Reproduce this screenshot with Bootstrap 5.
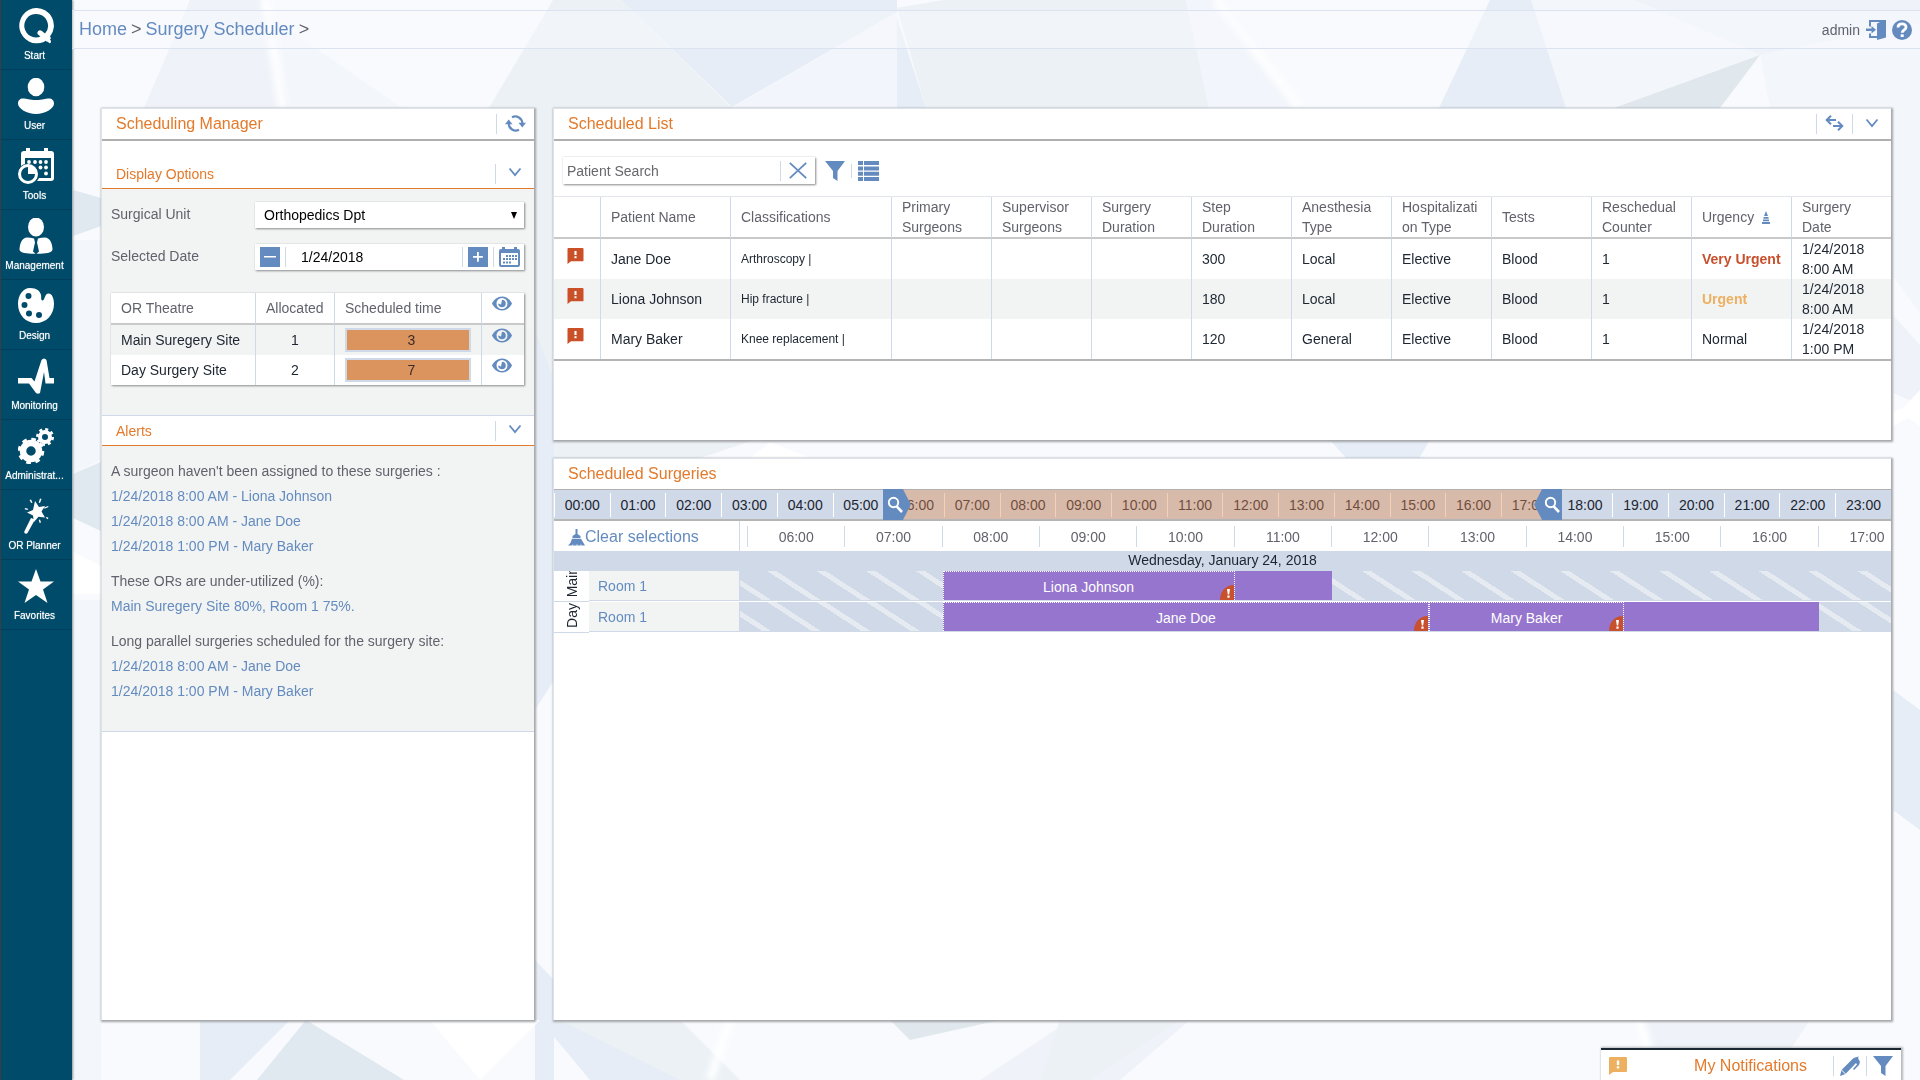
<!DOCTYPE html>
<html lang="en">
<head>
<meta charset="utf-8">
<meta name="viewport" content="width=device-width, initial-scale=1">
<title>Surgery Scheduler</title>
<link href="https://cdn.jsdelivr.net/npm/bootstrap@5.3.0/dist/css/bootstrap.min.css" rel="stylesheet">
<style>
:root{--blue:#648bbf;--pale:#cfd9e8;--orange:#e37a2b;--ink:#1d2530;--grey:#62626c;--soft:#f2f4f4;--navy:#004b69}
body{font-family:"Liberation Sans",Arial,sans-serif;font-size:14px;line-height:20px;color:var(--ink);background:#f6f9fc}
a{color:var(--blue);text-decoration:none}
svg{display:block;fill:currentColor;flex:none}
.q-backdrop{position:fixed;inset:0;width:100%;height:100%;z-index:-1}
.q-iconbtn{border:0;background:none;padding:0;color:var(--blue);flex:none}
.q-rule{width:1px;height:20px;background:var(--pale);flex:none}

.q-side{width:72px;background:var(--navy);border-left:1px solid #3a3d42;box-shadow:1px 0 2px #8a929a;flex:none}
.q-side a{height:70px;padding:8px 4px 0 0;border-bottom:1px solid #003f5b;color:#fff;font-size:10px;line-height:12px;text-shadow:0 0 1px rgba(255,255,255,.7)}
.q-side svg{width:36px;height:36px;margin-left:2px}
.q-side span{margin-top:6px}

.q-main{min-width:0}
.q-top{height:39px;margin-top:10px;padding:0 8px 0 7px;border:solid #dbe3f0;border-width:1px 0;background:rgba(250,251,254,.4)}
.q-user{gap:6px;color:var(--grey)}
.q-crumbs{font-size:18px;color:var(--grey);padding-bottom:2px}
.q-crumbs .breadcrumb-item+.breadcrumb-item::before{content:">";padding:0 4px 0 0;color:var(--grey)}
.q-crumbs .breadcrumb-item+.breadcrumb-item{padding-left:4px}
.q-work{padding:59px 29px 60px 29px;gap:19px}
.q-left{width:433px;flex:none}
.q-right{gap:18px;min-width:0}
.q-panel{background:#fff;border:solid #dde3ea;border-width:1px 0 0 1px;box-shadow:1px 1px 2px 1px #a3a5a8}
.q-bar{height:32px;padding:0 8px 0 14px;border-bottom:2px solid #b0b0b0;color:var(--orange);flex:none}
.q-bar h2,.q-notes h2{font-size:16px;line-height:20px;margin:0;font-weight:400}
.q-bar .q-iconbtn{padding-bottom:2px}
.q-sub{padding:0 12px 0 14px;border-bottom:1px solid var(--orange);color:var(--orange)}
.q-sub h3{font-size:14px;line-height:20px;margin:0;font-weight:400}
.q-display{height:48px;padding-top:19px}
.q-alerthead{height:31px;border-top:1px solid var(--pale)}
.q-options{background:var(--soft);padding:13px 10px 30px 9px;color:var(--grey)}
.q-field{margin-bottom:16px}
.q-field-last{margin-bottom:23px}
.q-field label{width:144px;padding-bottom:2px;flex:none}
.q-box{height:26px;background:#fff;border:0;border-radius:0;box-shadow:1px 1px 2px #8d8d8d,0 0 1px #c4c8cc;color:#000}
select.q-box{appearance:none;padding:0 9px;font-size:14px;background:#fff url("data:image/svg+xml,%3Csvg xmlns='http://www.w3.org/2000/svg' viewBox='0 0 6 7'%3E%3Cpath d='M0 0h6L3 7z'/%3E%3C/svg%3E") no-repeat right 7px center/6px 7px}
.q-date{gap:5px;padding:0 4px 0 5px}
.q-date input{border:0;font-size:14px;padding:0 10px;min-width:0;outline:0}
.q-step{width:20px;height:20px;background:var(--blue);color:#fff;border:0;padding:3px}
.q-gridbox{box-shadow:1px 1px 2px #8d8d8d,0 0 1px #b8bcc2}
.q-grid{width:100%;table-layout:fixed;margin:0;background:#fff;color:var(--ink);border-collapse:separate;border-spacing:0}
.q-grid th{font-weight:400;color:var(--grey);border-bottom:2px solid #c9c9c9}
.q-grid th,.q-grid td{padding:0 0 0 10px;border-left:1px solid var(--pale);overflow-wrap:anywhere}
.q-grid th:first-child,.q-grid td:first-child{border-left:0}
.q-or th{height:32px}.q-or td{height:30px}
.q-or tbody tr:nth-child(odd){background:var(--soft)}
.q-or svg{margin-bottom:5px}
.q-load{width:126px;height:24px;border:2px solid var(--pale);background:#db945d;color:#3a2c2a;padding-left:7px}
.q-alerts{background:var(--soft);border-bottom:1px solid var(--pale);padding:13px 10px 27px 9px;color:var(--grey);line-height:25px}
.q-alerts section{margin-bottom:10px}
.q-alerts p{margin:0}

.q-list{height:332px}
.q-tools{padding:16px 8px 12px 9px}
.q-search{width:252px;height:27px;margin-right:10px}
.q-search input{border:0;outline:0;padding:0 4px;font-size:14px;min-width:0}
.q-search input::placeholder{color:#68686c;opacity:1}
.q-rule-short{height:14px;margin:0 6px}
.q-sched{border-top:1px solid #e3e6ea;border-bottom:2px solid #b4b4b4}
.q-sched th,.q-sched td{height:40px;padding-right:10px}
.q-sched th{height:42px}
.q-sched tbody tr:nth-child(even){background:var(--soft)}
.q-sched .q-flag{padding-left:13px;color:#ca5028}
.q-flag svg{margin-bottom:6px}
.q-class{font-size:12px}
.q-sched .q-very{color:#c8502c;font-weight:700;white-space:nowrap;padding-right:0}
.q-urg{color:#edb060;font-weight:700}
.q-sort{color:var(--blue)}

.q-day{height:31px;background:var(--pale);border-bottom:2px solid #b5b5b5;position:relative;margin-top:-1px}
.q-day>span{border-left:1px solid #fff;height:24px;line-height:24px;flex:1 1 0;min-width:0;text-align:center}
.q-tint{position:absolute;top:0;bottom:0;background:rgba(229,140,80,.4)}
.q-grip{position:absolute;top:-1px;height:31px;width:28px;color:#fff;background:var(--blue);border:0;padding:0}
.q-grip-a{clip-path:polygon(0 0,20px 0,28px 50%,20px 100%,0 100%);padding-left:4px}
.q-grip-b{clip-path:polygon(8px 0,100% 0,100% 100%,8px 100%,0 50%);padding-left:10px}
.q-name{width:186px;flex:none}
.q-hourrow{height:30px}
.q-clear{font-size:16px;padding:2px 0 0 14px;border-right:1px solid var(--pale)}
.q-hours{min-width:0;overflow:hidden;padding:5px 0 0 7px}
.q-hours span{flex:none;border-left:1px solid var(--pale);height:21px;line-height:22px;text-align:center;color:var(--grey)}
.q-date-row{background:var(--pale);height:20px;text-align:center;line-height:19px}
.q-lane{height:31px}
.q-site{width:35px;background:#fff;border-bottom:1px solid var(--pale);overflow:hidden;flex:none}
.q-site span{writing-mode:vertical-rl;transform:rotate(180deg);white-space:nowrap;padding-top:4px;line-height:16px}
.q-room{background:var(--soft);border:solid var(--pale);border-width:0 1px 1px 0;padding-left:9px;line-height:30px;margin-bottom:1px}
.q-track{min-width:0;height:29px;background:repeating-linear-gradient(33deg,var(--pale) 0 12px,#e6ebf2 12px 17px,var(--pale) 17px 27px)}
.q-trackbox{min-width:0;border-bottom:1px solid var(--pale);background:#f6f8fa;margin-bottom:1px}
.q-case{background:#9575cd;color:#fff;height:29px;line-height:31px;text-align:center;position:relative;flex:none}
.q-booked{border:dotted #fff;border-width:1px 1px 0 1px}
.q-case svg{position:absolute;right:0;bottom:0}

.q-notes{position:fixed;right:19px;bottom:0;width:300px;height:32px;gap:6px;background:#fff;border-top:2px solid #1b2733;box-shadow:1px 0 2px 1px #b3b7bb;padding:2px 8px 0}
.q-notes h2{color:var(--orange);text-align:right;padding-right:20px}
.q-amber{color:#edb060}
</style>
<script src="https://cdn.jsdelivr.net/npm/bootstrap@5.3.0/dist/js/bootstrap.bundle.min.js"></script>
</head>
<body>
<svg class="q-backdrop" viewBox="0 0 1920 1080" preserveAspectRatio="none" aria-hidden="true">
<defs><filter id="soft"><feGaussianBlur stdDeviation="3"/></filter></defs>
<rect width="1920" height="1080" fill="#f8fafd"/>
<path fill="#eff3f9" d="M190 0h71l29 108 20 80H110zM1634 0h286v23l-160 32zM1893 315l27 30v60l-27-12zM980 1080l90-60h120l-70 60zM1640 1020h170l-40 60h-110z"/>
<path fill="#f3f7fc" d="M261 10l141 98h-112zM1531 0h103l126 55-146 53h-48zM1760 55l160-32v290l-150-205zM73 240h28v220l-28 14zM73 600h28v480H73z"/>
<path fill="#ecf1f6" d="M553 0h68l111 108H489zM897 8l47-8h242l23 108H926zM535 100h19v350h-19zM554 440h200l-60 20H554zM560 1020h120l60 60H640zM1060 1020h120l-90 60h-50z"/>
<path fill="#e6edf6" d="M621 0h276v12L732 107zM895 12l31 96h-29zM1490 0h41l35 108h-127zM535 330l19 50v300l-19 30zM1330 440h100l-12 20h-70zM200 1020h90l-60 60h-30zM540 1020h20l120 60h-90zM1893 690l27 20v120l-27-20zM535 960l19 20v100h-19z"/>
<path fill="#f2f5fb" d="M897 12v96H732zM1186 0h29l89 108h-95z"/>
<path fill="#e0e8ee" d="M1760 55l-40 53h-106zM890 1020h110l-90 20z"/>
<path fill="#e0e8f0" d="M73 190l28 8v28l-28 10zM73 474l28-12v69l-28-13zM306 1020l98 60H257z"/>
<path fill="#fff" d="M73 552l28 14v28H73zM430 1020h110l-60 60zM770 442l40 16h-60zM1893 412l10-4 17-18v36l-12-8-15 8z"/>
<g fill="none" stroke="#fff" stroke-width="8" filter="url(#soft)"><path d="M265 0l18 108M1215 0l85 108M1640 1020l18 60M730 1020l-20 60"/></g>
</svg>
<svg width="0" height="0" class="position-absolute" aria-hidden="true">
<defs>
<symbol id="i-funnel" viewBox="0 0 20 20"><path d="M0 0h20l-7.500 10v10l-4.500-3v-7z"/></symbol>
<symbol id="i-eye" viewBox="0 0 20 15"><path fill-rule="evenodd" d="M10 .5c4.400 0 8 3 10 7-2 4-5.600 7-10 7s-8-3-10-7c2-4 5.600-7 10-7zm0 1.500a5.500 5.500 0 1 0 0 11 5.500 5.500 0 0 0 0-11z"/><path d="M10 3.700A3.800 3.800 0 1 1 6.200 7.500L9 8.500z"/></symbol>
<symbol id="i-chev" viewBox="0 0 14 10"><path fill="none" stroke="currentColor" stroke-width="1.800" d="M1.500 1.500L7 8l5.500-6.500"/></symbol>
<symbol id="i-flag" viewBox="0 0 18 18"><path fill-rule="evenodd" d="M1 0h16q1 0 1 1v13q0 1-1 1H4l-4 3V1q0-1 1-1zm6.800 3.500v4.500h2.400V3.500zm0 5.800v2.200h2.400V9.300z"/></symbol>
<symbol id="i-mag" viewBox="0 0 16 18"><g fill="none" stroke="currentColor"><circle cx="6.500" cy="6.500" r="4.700" stroke-width="1.900"/><path stroke-width="2.600" d="M9.700 10.300l5.300 5.700"/></g></symbol>
<symbol id="i-warn" viewBox="0 0 14 15"><path fill="#c8502c" d="M14 0v15H0C0 7 5 0 14 0z"/><path fill="#fff" d="M7 4h3l-.8 5.500H7.800zM7.400 10.500h2.200v2.300H7.400z"/></symbol>
</defs>
</svg>

<div class="d-flex min-vh-100">
<nav class="q-side d-flex flex-column" aria-label="Main">
<a href="#" class="d-flex flex-column align-items-center"><svg viewBox="0 0 36 36"><path fill-rule="evenodd" d="M18 0a17.500 17.500 0 0 1 14 28.500l1 1.500 -1.500 2q-2 3-4 .8L25.800 34A17.700 17.700 0 1 1 18 0zm0 6a11.700 11.700 0 1 0 4.500 22.500l-2.800-2.300q-1-1.500.6-3.200 1.500-1.500 3.300-.2l3.400 2.700A11.700 11.700 0 0 0 18 6z"/><path d="M26 29l5 6q2 1 2-2l-3-5z"/></svg><span>Start</span></a>
<a href="#" class="d-flex flex-column align-items-center"><svg viewBox="0 0 36 36"><ellipse cx="18" cy="9" rx="8.300" ry="9.300"/><path d="M5 20.500c4 0 6 1.500 13 1.500s9-1.500 13-1.500c3 0 5 2 5 5 0 5-9 10.500-18 10.500S0 30.500 0 25.500c0-3 2-5 5-5z"/></svg><span>User</span></a>
<a href="#" class="d-flex flex-column align-items-center"><svg viewBox="0 0 36 36"><path fill-rule="evenodd" d="M8 0h4v3h14V0h4v3h3q3 0 3 3v24q0 3-3 3H19a11 11 0 0 0 2-3h12V10H7v6a11 11 0 0 0-4 2V6q0-3 3-3h2z"/><path fill-rule="evenodd" d="M10 16a10 10 0 1 1 0 20 10 10 0 0 1 0-20zm0 3a7 7 0 1 0 7 7h-7z"/><g><circle cx="11" cy="14" r="1.900"/><circle cx="17" cy="14" r="1.900"/><circle cx="22.500" cy="14" r="1.900"/><circle cx="28" cy="14" r="1.900"/><circle cx="22.500" cy="19.500" r="1.900"/><circle cx="28" cy="19.500" r="1.900"/><circle cx="28" cy="25.500" r="1.900"/></g></svg><span>Tools</span></a>
<a href="#" class="d-flex flex-column align-items-center"><svg viewBox="0 0 36 36"><ellipse cx="18" cy="9" rx="8" ry="9.500"/><path d="M9 19.500q3.500 0 7 1l1 4-2 9 2.500 2.200h-4C6 35.500 1 34 1.500 31c.5-7 3-11 7.500-11.500zM27 19.500q-3.500 0-7 1l-1 4 2 9-2.500 2.200h4c7.500-.2 12.500-1.700 12-4.700-.5-7-3-11-7.500-11.500z"/></svg><span>Management</span></a>
<a href="#" class="d-flex flex-column align-items-center"><svg viewBox="0 0 36 36"><path fill-rule="evenodd" d="M12 0c7 0 10 3 11 7 .5 3-.5 5 1.500 5.500 2.500 0 2-7 6-7 3.500 0 5.500 5 5.500 10.500C36 27 28 35 18 35 8 35 0 27 0 16 0 7 5 0 12 0zM10.500 5a3 3 0 1 0 0 6 3 3 0 0 0 0-6zM6.500 14a3 3 0 1 0 0 6 3 3 0 0 0 0-6zM11 22.500a3 3 0 1 0 0 6 3 3 0 0 0 0-6zM21 24a3 3 0 1 0 0 6 3 3 0 0 0 0-6z"/></svg><span>Design</span></a>
<a href="#" class="d-flex flex-column align-items-center"><svg viewBox="0 0 36 36"><path d="M0 20h13.500l3 3.500L23.500 2q2.500-3 5 0L31.500 20H36v5.500h-8.500L26 14l-4 21q-2 1.500-4 0L11 25.500H0z"/></svg><span>Monitoring</span></a>
<a href="#" class="d-flex flex-column align-items-center"><svg viewBox="0 0 36 36"><g fill="none" stroke="currentColor"><circle cx="13" cy="23" r="8" stroke-width="6.500"/><circle cx="13" cy="23" r="11.800" stroke-width="3" stroke-dasharray="4.630 4.630"/><circle cx="27" cy="9" r="5" stroke-width="4"/><circle cx="27" cy="9" r="7.700" stroke-width="2.600" stroke-dasharray="3.020 3.020"/></g></svg><span>Administrat...</span></a>
<a href="#" class="d-flex flex-column align-items-center"><svg viewBox="0 0 36 36"><path d="M17 3l4 6 6-1-3.500 5.500 3.500 6-6.500-.7L16 24l-1-6.500-6-3 6-2.500zM13 20l4 1.500L9.500 35q-1.500 1.500-3 0-.5-1 0-2zM23.500 1l-1.500 4-1.300-.5L22 .5zM13 1.500l1.500 3-1.300.6-1.700-3zM30.500 9l-4 1.700-.4-1.300 4-1.500zM29 19l1.500 1-.8 1.200-2-1.400zM22 21.500l1 3-1.300.4-1-3zM7 10l3 .8-.3 1.300-3-.8z"/></svg><span>OR Planner</span></a>
<a href="#" class="d-flex flex-column align-items-center"><svg viewBox="0 0 36 36"><path d="M18 1l4.500 12.500H36l-11 8L29.500 35 18 27 6.500 35 11 21.500l-11-8h13.500z"/></svg><span>Favorites</span></a>
</nav>

<div class="q-main flex-grow-1 d-flex flex-column">
<header class="q-top d-flex align-items-center justify-content-between">
<nav aria-label="breadcrumb"><ol class="breadcrumb q-crumbs mb-0"><li class="breadcrumb-item"><a href="#">Home</a></li><li class="breadcrumb-item"><a href="#">Surgery Scheduler</a></li><li class="breadcrumb-item"></li></ol></nav>
<div class="q-user d-flex align-items-center"><span>admin</span>
<button class="q-iconbtn" aria-label="Sign out"><svg width="20" height="20" viewBox="0 0 20 20"><path d="M3 0h17v17.500L11 20v-2H3v-4.500h2V16h6V3.500L14 2H5v4.500H3z"/><path d="M0 8.500h5.500V6L10 9.700 5.500 13.500V11H0z"/></svg></button>
<button class="q-iconbtn" aria-label="Help"><svg width="20" height="20" viewBox="0 0 20 20"><circle cx="10" cy="10" r="10"/><path fill="none" stroke="#fff" stroke-width="2.800" d="M6 7.500C6 2.800 14 2.800 14 7.200c0 2.600-3.800 2.600-3.800 5.600"/><path fill="#fff" d="M8.700 14.300h3V17h-3z"/></svg></button></div>
</header>

<main class="q-work flex-grow-1 d-flex">
<section class="q-left q-panel">
<div class="q-bar d-flex align-items-center justify-content-between"><h2>Scheduling Manager</h2><div class="d-flex gap-2 align-items-center"><span class="q-rule"></span><button class="q-iconbtn" aria-label="Refresh"><svg width="21" height="17" viewBox="0 0 21 17"><g fill="none" stroke="currentColor" stroke-width="2.200"><path d="M7 2.300a7 7 0 0 1 10.300 6.200M14 14.700A7 7 0 0 1 3.700 8.500"/></g><path d="M13.500 7.800H21l-3.700 4.600zM0 9.200h7.500L3.700 4.600z"/></svg></button></div></div>
<div class="q-sub q-display d-flex align-items-center justify-content-between"><h3>Display Options</h3><div class="d-flex gap-2 align-items-center"><span class="q-rule me-1"></span><button class="q-iconbtn pb-1" aria-label="Collapse display options"><svg width="14" height="10"><use href="#i-chev"/></svg></button></div></div>
<div class="q-options">
<div class="q-field d-flex align-items-center"><label for="unit">Surgical Unit</label><select id="unit" class="q-box flex-grow-1"><option>Orthopedics Dpt</option></select></div>
<div class="q-field q-field-last d-flex align-items-center"><label for="day">Selected Date</label><div class="q-box q-date flex-grow-1 d-flex align-items-center"><button class="q-step" aria-label="Previous day"><svg width="14" height="14" viewBox="0 0 14 14"><path d="M1 6h12v1.500H1z"/></svg></button><span class="q-rule"></span><input id="day" type="text" value="1/24/2018" class="flex-grow-1" size="10"><span class="q-rule"></span><button class="q-step" aria-label="Next day"><svg width="14" height="14" viewBox="0 0 14 14"><path d="M2 6h4V2h1.800v4h4v1.800h-4v4H6v-4H2z"/></svg></button><span class="q-rule"></span><button class="q-iconbtn" aria-label="Open calendar"><svg width="21" height="20" viewBox="0 0 21 20"><path fill-rule="evenodd" d="M3 0h3v2h9V0h3v2h1q2 0 2 2v14q0 2-2 2H2q-2 0-2-2V4q0-2 2-2h1zM2 6v11.500q0 .5.5.5h16q.5 0 .5-.5V6z"/><path d="M7 8h2v2H7zm3 0h2v2h-2zm3 0h2v2h-2zm3 0h2v2h-2zM4 11h2v2H4zm3 0h2v2H7zm3 0h2v2h-2zm3 0h2v2h-2zm3 0h2v2h-2zM4 14.500h2v2H4zm3 0h2v2H7zm3 0h2v2h-2z"/></svg></button></div></div>
<div class="q-gridbox"><table class="q-grid q-or">
<colgroup><col><col style="width:79px"><col style="width:147px"><col style="width:43px"></colgroup>
<thead><tr><th>OR Theatre</th><th>Allocated</th><th>Scheduled time</th><th><button class="q-iconbtn" aria-label="Show all sites"><svg width="20" height="15"><use href="#i-eye"/></svg></button></th></tr></thead>
<tbody><tr><td>Main Suregery Site</td><td class="text-center px-0">1</td><td><div class="q-load text-center">3</div></td><td><button class="q-iconbtn" aria-label="Show Main Suregery Site"><svg width="20" height="15"><use href="#i-eye"/></svg></button></td></tr>
<tr><td>Day Surgery Site</td><td class="text-center px-0">2</td><td><div class="q-load text-center">7</div></td><td><button class="q-iconbtn" aria-label="Show Day Surgery Site"><svg width="20" height="15"><use href="#i-eye"/></svg></button></td></tr></tbody>
</table></div>
</div>
<div class="q-sub q-alerthead d-flex align-items-center justify-content-between"><h3>Alerts</h3><div class="d-flex gap-2 align-items-center"><span class="q-rule me-1"></span><button class="q-iconbtn pb-1" aria-label="Collapse alerts"><svg width="14" height="10"><use href="#i-chev"/></svg></button></div></div>
<div class="q-alerts">
<section><p>A surgeon haven't been assigned to these surgeries :</p><a class="d-block" href="#">1/24/2018 8:00 AM - Liona Johnson</a><a class="d-block" href="#">1/24/2018 8:00 AM - Jane Doe</a><a class="d-block" href="#">1/24/2018 1:00 PM - Mary Baker</a></section>
<section><p>These ORs are under-utilized (%):</p><a class="d-block" href="#">Main Suregery Site 80%, Room 1 75%.</a></section>
<section class="mb-0"><p>Long parallel surgeries scheduled for the surgery site:</p><a class="d-block" href="#">1/24/2018 8:00 AM - Jane Doe</a><a class="d-block" href="#">1/24/2018 1:00 PM - Mary Baker</a></section>
</div>
</section>

<div class="q-right flex-grow-1 d-flex flex-column">
<section class="q-panel q-list">
<div class="q-bar d-flex align-items-center justify-content-between"><h2>Scheduled List</h2><div class="d-flex gap-2 align-items-center pe-1"><span class="q-rule"></span><button class="q-iconbtn" aria-label="Resize"><svg width="19" height="16" viewBox="0 0 19 16"><g fill="none" stroke="currentColor" stroke-width="2"><path d="M1.500 5H11M6 .8L1.700 5 6 9.200M8 11h9.500M13 6.800l4.300 4.200-4.300 4.200"/></g></svg></button><span class="q-rule me-1"></span><button class="q-iconbtn" aria-label="Collapse list"><svg width="14" height="10"><use href="#i-chev"/></svg></button></div></div>
<div class="q-tools d-flex align-items-center"><div class="q-box q-search d-flex align-items-center"><input class="flex-grow-1" type="text" placeholder="Patient Search" aria-label="Patient Search"><span class="q-rule"></span><button class="q-iconbtn px-2" aria-label="Clear search"><svg width="18" height="17" viewBox="0 0 18 17"><path fill="none" stroke="currentColor" stroke-width="1.800" d="M.8.8l16.400 15.400M17.200.8L.8 16.200"/></svg></button></div>
<button class="q-iconbtn" aria-label="Filter"><svg width="20" height="20"><use href="#i-funnel"/></svg></button><span class="q-rule q-rule-short"></span><button class="q-iconbtn" aria-label="Columns"><svg width="21" height="20" viewBox="0 0 21 20"><path d="M0 0h5v4H0zm6 0h15v4H6zM0 5.500h5v4H0zm6 0h15v4H6zM0 10.800h5v4H0zm6 0h15v4H6zM0 16h5v4H0zm6 0h15v4H6z"/></svg></button></div>
<table class="q-grid q-sched">
<colgroup><col style="width:46px"><col style="width:130px"><col style="width:161px"><col><col><col><col><col><col><col><col><col><col></colgroup>
<thead><tr><th></th><th>Patient Name</th><th>Classifications</th><th>Primary Surgeons</th><th>Supervisor Surgeons</th><th>Surgery Duration</th><th>Step Duration</th><th>Anesthesia Type</th><th>Hospitalization Type</th><th>Tests</th><th>Reschedual Counter</th><th><span class="d-flex align-items-center">Urgency <svg class="q-sort ms-2" width="8" height="13" viewBox="0 0 8 13"><path d="M4 0l2 5H2zM1.500 6h5v1.700h-5zM1 8.500h6v1.700H1zM0 11h8v2H0z"/></svg></span></th><th>Surgery Date</th></tr></thead>
<tbody>
<tr><td class="q-flag"><svg width="17" height="16"><title>Alert</title><use href="#i-flag"/></svg></td><td>Jane Doe</td><td class="q-class">Arthroscopy |</td><td></td><td></td><td></td><td>300</td><td>Local</td><td>Elective</td><td>Blood</td><td>1</td><td class="q-very">Very Urgent</td><td>1/24/2018 8:00 AM</td></tr>
<tr><td class="q-flag"><svg width="17" height="16"><title>Alert</title><use href="#i-flag"/></svg></td><td>Liona Johnson</td><td class="q-class">Hip fracture |</td><td></td><td></td><td></td><td>180</td><td>Local</td><td>Elective</td><td>Blood</td><td>1</td><td class="q-urg">Urgent</td><td>1/24/2018 8:00 AM</td></tr>
<tr><td class="q-flag"><svg width="17" height="16"><title>Alert</title><use href="#i-flag"/></svg></td><td>Mary Baker</td><td class="q-class">Knee replacement |</td><td></td><td></td><td></td><td>120</td><td>General</td><td>Elective</td><td>Blood</td><td>1</td><td>Normal</td><td>1/24/2018 1:00 PM</td></tr>
</tbody></table>
</section>

<section class="q-panel flex-grow-1">
<div class="q-bar d-flex align-items-center"><h2>Scheduled Surgeries</h2></div>
<div class="q-day d-flex align-items-center">
<span>00:00</span><span>01:00</span><span>02:00</span><span>03:00</span><span>04:00</span><span>05:00</span><span>06:00</span><span>07:00</span><span>08:00</span><span>09:00</span><span>10:00</span><span>11:00</span><span>12:00</span><span>13:00</span><span>14:00</span><span>15:00</span><span>16:00</span><span>17:00</span><span>18:00</span><span>19:00</span><span>20:00</span><span>21:00</span><span>22:00</span><span>23:00</span>
<div class="q-tint" style="left:26.100%;right:26.100%"></div>
<button class="q-grip q-grip-a" style="left:24.600%" aria-label="Range start"><svg width="16" height="18"><use href="#i-mag"/></svg></button>
<button class="q-grip q-grip-b" style="right:24.600%" aria-label="Range end"><svg width="16" height="18"><use href="#i-mag"/></svg></button>
</div>
<div class="q-hourrow d-flex">
<a href="#" class="q-name q-clear d-flex align-items-center"><svg width="17" height="17" viewBox="0 0 17 17"><path d="M7.500 0h2v5l3 2v2h-8V7l3-2zM4 9.800h9l4 6.700h-3.500l-1-2 .3 2H9.500l-.5-2-.5 2H5l.3-2-1 2H0q3-2 4-6.700z"/></svg>Clear selections</a>
<div class="q-hours flex-grow-1 d-flex">
<span style="width:8.510%">06:00</span><span style="width:8.510%">07:00</span><span style="width:8.510%">08:00</span><span style="width:8.510%">09:00</span><span style="width:8.510%">10:00</span><span style="width:8.510%">11:00</span><span style="width:8.510%">12:00</span><span style="width:8.510%">13:00</span><span style="width:8.510%">14:00</span><span style="width:8.510%">15:00</span><span style="width:8.510%">16:00</span><span style="width:8.510%">17:00</span></div>
</div>
<div class="q-date-row">Wednesday, January 24, 2018</div>
<div class="q-lane d-flex">
<div class="q-name d-flex"><div class="q-site d-flex justify-content-center align-items-end"><span>Main</span></div><a href="#" class="q-room flex-grow-1">Room 1</a></div>
<div class="q-trackbox flex-grow-1"><div class="q-track d-flex"><div class="q-case q-booked" style="margin-left:17.600%;width:25.370%">Liona Johnson<svg width="14" height="15"><use href="#i-warn"/></svg></div><div class="q-case" style="width:8.460%"></div></div></div>
</div>
<div class="q-lane d-flex">
<div class="q-name d-flex"><div class="q-site d-flex justify-content-center align-items-end"><span>Day</span></div><a href="#" class="q-room flex-grow-1">Room 1</a></div>
<div class="q-trackbox flex-grow-1"><div class="q-track d-flex"><div class="q-case q-booked" style="margin-left:17.600%;width:42.280%">Jane Doe<svg width="14" height="15"><use href="#i-warn"/></svg></div><div class="q-case q-booked" style="width:16.920%">Mary Baker<svg width="14" height="15"><use href="#i-warn"/></svg></div><div class="q-case" style="width:16.920%"></div></div></div>
</div>
</section>
</div>
</main>
</div>
</div>

<aside class="q-notes d-flex align-items-center"><svg class="q-amber" width="18" height="18"><use href="#i-flag"/></svg><h2 class="flex-grow-1">My Notifications</h2><span class="q-rule"></span><button class="q-iconbtn" aria-label="Edit"><svg width="20" height="20" viewBox="0 0 20 20"><path d="M0 20l1.500-6L13 2.500l2-1L19 .5l-1 1.500 2 4-1 3-5 5-1-1 4-4.500-1-1.500L5.500 18z"/><path stroke="#fff" d="M1.500 14l4 4"/></svg></button><span class="q-rule"></span><button class="q-iconbtn" aria-label="Filter notifications"><svg width="20" height="20"><use href="#i-funnel"/></svg></button></aside>
</body>
</html>
